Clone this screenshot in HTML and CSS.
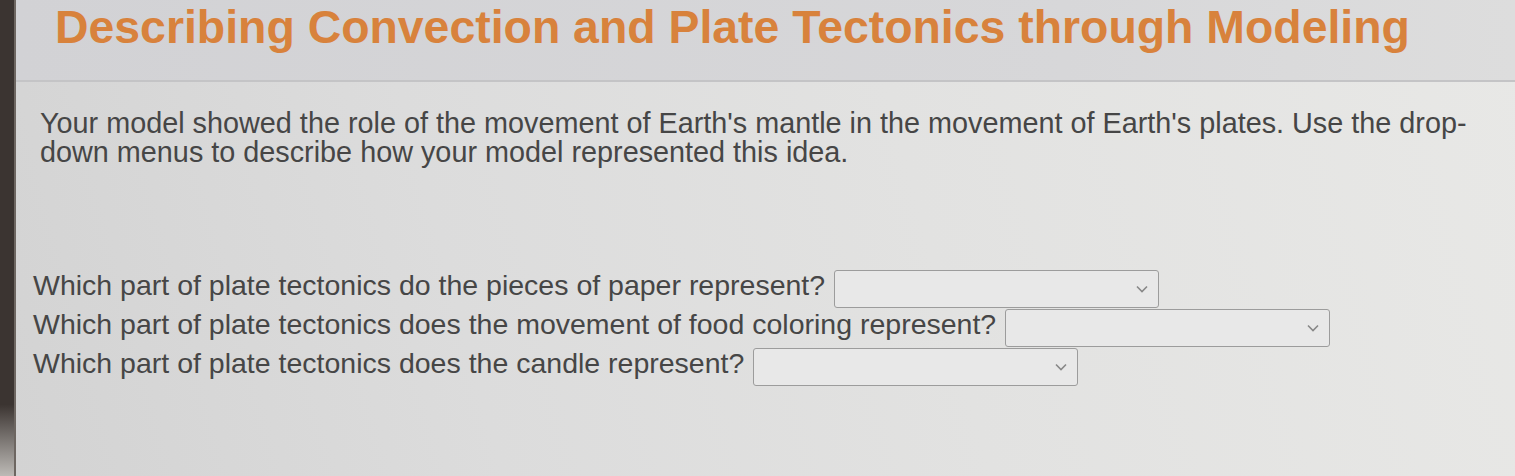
FILE: index.html
```html
<!DOCTYPE html>
<html>
<head>
    <title>Describing Convection and Plate Tectonics through Modeling</title>
    <meta name="viewport" content="width=device-width, initial-scale=1">
    <link rel="stylesheet" href="styles.css">
</head>
<body>
    <div class="bezel"></div>
    <div class="page">
        <div class="title-bar">
            <h1>Describing Convection and Plate Tectonics through Modeling</h1>
        </div>
        <div class="content">
            <p class="prompt">Your model showed the role of the movement of Earth's mantle in the movement of Earth's plates. Use the drop-down menus to describe how your model represented this idea.</p>

            <div class="questions">
                <div class="question">
                    <label for="q-paper">Which part of plate tectonics do the pieces of paper represent?</label>
                    <select id="q-paper" class="answer"><option></option></select>
                </div>
                <div class="question">
                    <label for="q-coloring">Which part of plate tectonics does the movement of food coloring represent?</label>
                    <select id="q-coloring" class="answer"><option></option></select>
                </div>
                <div class="question">
                    <label for="q-candle">Which part of plate tectonics does the candle represent?</label>
                    <select id="q-candle" class="answer"><option></option></select>
                </div>
            </div>
        </div>
    </div>
</body>
</html>
```

FILE: styles.css
```css
body {
    margin: 0;
    display: flex;
    min-height: 476px;
    font-family: "Liberation Sans", Arial, sans-serif;
    background: #e1e1e0;
    overflow: hidden;
}
.bezel {
    width: 14px;
    flex-shrink: 0;
    background: linear-gradient(180deg, #3b3431 0%, #3b3431 85%, #bdbab6 100%);
    border-right: 2px solid #6d6661;
}
.page {
    flex: 1;
    background: linear-gradient(75deg, #d3d3d3 0%, #dcdcdc 30%, #e2e2e1 60%, #e8e8e6 100%);
}
.title-bar {
    height: 82px;
    background: linear-gradient(90deg, #d2d2d5 0%, #d7d7d9 70%, #dddddd 100%);
    border-bottom: 2px solid #c4c4c6;
    box-sizing: border-box;
}
h1 {
    margin: 0;
    padding: 0 0 0 39px;
    font-size: 46.4px;
    line-height: 54px;
    font-weight: bold;
    color: #d8823c;
}
.content {
    padding: 0 20px 0 24px;
    color: #464646;
}
.prompt {
    margin: 27px 0 0;
    font-size: 28.8px;
    line-height: 29px;
}
.questions {
    margin-top: 101px;
    margin-left: -7px;
}
.question {
    display: flex;
    align-items: flex-start;
    height: 39px;
    font-size: 28.5px;
    line-height: 34px;
}
.answer {
    appearance: none;
    width: 325px;
    height: 38px;
    margin: 2px 0 0 9px;
    border: 1px solid #9c9c9c;
    border-radius: 3px;
    background-color: #e8e8e8;
    background-image: url("data:image/svg+xml;utf8,<svg xmlns='http://www.w3.org/2000/svg' width='12' height='8' viewBox='0 0 12 8'><path d='M1 1.5l5 5 5-5' fill='none' stroke='%23888' stroke-width='1.6'/></svg>");
    background-repeat: no-repeat;
    background-position: right 10px center;
}
```
